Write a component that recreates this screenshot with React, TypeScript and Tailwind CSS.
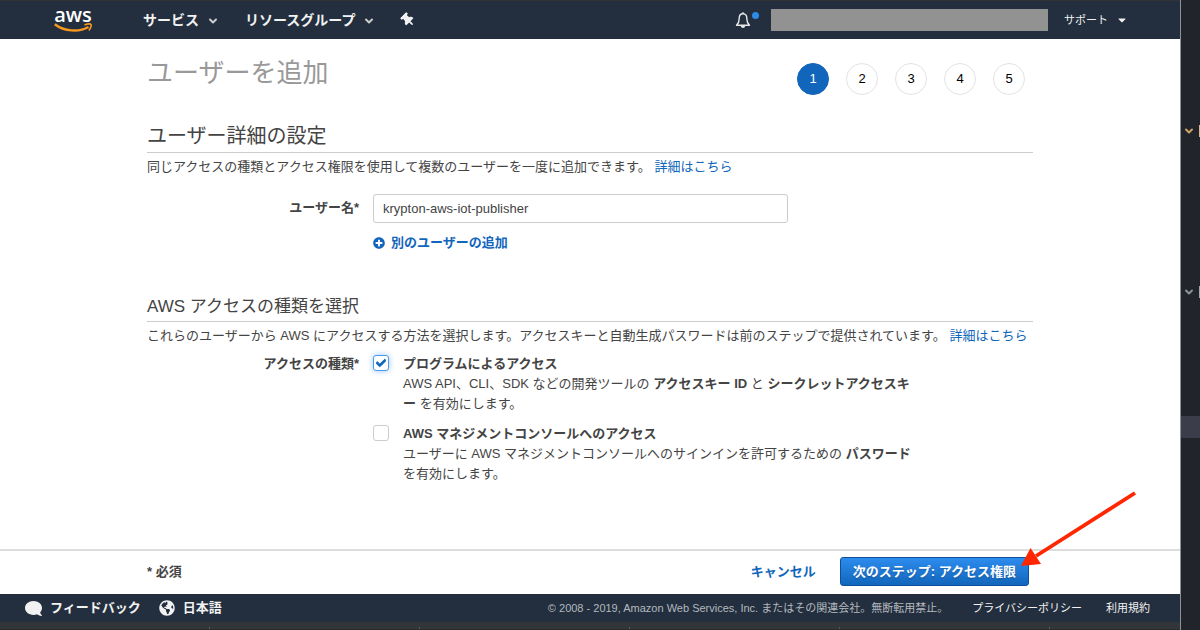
import React, { useState } from 'react';
import { ChevronDown } from 'lucide-react';
import { FaCaretDown, FaCheck, FaComment, FaGlobeAmericas, FaPlusCircle, FaThumbtack } from 'react-icons/fa';

const steps = [1, 2, 3, 4, 5];
const dockTabs = [1, 2, 3, 4, 5];

const AwsLogo: React.FC = () => (
  <a href="#" className="flex w-[38px] flex-col items-center text-white">
    <span className="font-['Open_Sans',sans-serif] text-[20px] leading-[13px] font-semibold">aws</span>
    <svg viewBox="0 0 38 10" className="mt-0.5 h-[10px] w-[38px]" fill="none" stroke="#f7981f">
      <path d="M.8 1.200C10 8.500 25 9.500 34.500 4" strokeWidth="2.400" />
      <path d="M30.500 2C33.500 .8 36.500 .8 37 1.500S36.800 5.500 34.800 7.500" strokeWidth="1.600" />
    </svg>
  </a>
);

const Bell: React.FC = () => (
  <svg viewBox="0 0 16 17" className="h-[17px] w-4" fill="none" stroke="#e8e8e8" strokeWidth="1.400">
    <path d="M8 1.800C5.200 1.800 4.200 4 4.200 6.500C4.200 10 3.300 11.500 1.500 13.300H14.500C12.700 11.500 11.800 10 11.800 6.500C11.800 4 10.800 1.800 8 1.800Z" strokeLinejoin="round" />
    <path d="M8 .3V2" />
    <path d="M5.800 13.800C6 16.700 10 16.700 10.200 13.800Z" fill="#e8e8e8" stroke="none" />
  </svg>
);

const Arrow: React.FC = () => (
  <svg viewBox="0 0 117 78" className="pointer-events-none absolute -right-[108px] bottom-[18px] h-[78px] w-[117px]">
    <path d="M115 3L16 66" stroke="#ff2600" strokeWidth="3.800" />
    <path d="M1 76L10.500 58L21 74Z" fill="#ff2600" />
  </svg>
);

type AccessOptionProps = {
  id: string;
  title: string;
  checked: boolean;
  onChange: (checked: boolean) => void;
  children: React.ReactNode;
};

const AccessOption: React.FC<AccessOptionProps> = ({ id, title, checked, onChange, children }) => (
  <div className="flex gap-[14px]">
    <span className="relative mt-px size-4 shrink-0">
      <input
        id={id}
        type="checkbox"
        checked={checked}
        onChange={(e) => onChange(e.target.checked)}
        className="block size-4 appearance-none rounded-[3px] border border-[#ccc] bg-white checked:border-[#4a9bee] checked:shadow-[0_0_6px_#9cc8f5]"
      />
      {checked && <FaCheck size={10} className="pointer-events-none absolute top-[3px] left-[3px] stroke-[#1166bb] stroke-[50px] text-[#1166bb]" />}
    </span>
    <div className="whitespace-nowrap">
      <label htmlFor={id} className="block font-bold">{title}</label>
      <p>{children}</p>
    </div>
  </div>
);

const EditorStrip: React.FC = () => (
  <aside className="flex w-5 shrink-0 flex-col border-l border-[#8b9396] bg-[#21252b]">
    <div className="mt-[125px] flex items-center justify-between">
      <ChevronDown size={12} strokeWidth={4} className="ml-0.5 text-[#c8a365]" />
      <span className="h-3 w-px bg-[#d7b981]" />
    </div>
    <div className="mt-[149px] flex items-center justify-between">
      <ChevronDown size={12} strokeWidth={4} className="ml-0.5 text-[#8b919d]" />
      <span className="h-3 w-px bg-[#a3a8b3]" />
    </div>
    <div className="mt-[118px] h-[22px] bg-[#3b3e4a]" />
  </aside>
);

const App: React.FC = () => {
  const [userName, setUserName] = useState('krypton-aws-iot-publisher');
  const [programmatic, setProgrammatic] = useState(true);
  const [consoleAccess, setConsoleAccess] = useState(false);

  return (
    <div className="flex min-h-screen bg-white font-['Liberation_Sans','Noto_Sans_CJK_JP',sans-serif] text-[13px] leading-5 text-[#444]">
      <div className="flex min-w-0 flex-1 flex-col">
        {/* Top navigation */}
        <header className="flex h-[39px] items-center border-t border-[#333] bg-[#232f3e] pr-[52px] pl-[54px] text-[#f2f2f2]">
          <AwsLogo />
          <nav className="ml-[51px] flex items-center text-[14px] font-bold">
            <button className="flex items-center gap-2">
              サービス
              <ChevronDown size={12} strokeWidth={4} className="mt-0.5 text-[#ccc]" />
            </button>
            <button className="ml-[26px] flex items-center gap-2">
              リソースグループ
              <ChevronDown size={12} strokeWidth={4} className="mt-0.5 text-[#ccc]" />
            </button>
            <button aria-label="Pin" className="ml-[26px]">
              <FaThumbtack size={14} className="-rotate-45" />
            </button>
          </nav>
          <div className="ml-auto flex items-center">
            <button aria-label="Notifications" className="relative">
              <Bell />
              <span className="absolute top-0 -right-2 size-[7px] rounded-full bg-[#2e8be6]" />
            </button>
            <div className="ml-5 h-[22px] w-[277px] bg-[#929292]" />
            <button className="ml-4 flex items-center gap-2 text-[11px]">
              サポート
              <FaCaretDown size={12} />
            </button>
          </div>
        </header>

        <main className="flex-1 px-[147px] pt-[18px]">
          <div className="flex justify-between">
            <h1 className="text-[26px] leading-8 text-[#999]">ユーザーを追加</h1>
            <ol className="mt-1.5 mr-2 flex gap-[17px] text-black">
              {steps.map((step) => (
                <li
                  key={step}
                  className={`flex size-8 items-center justify-center rounded-full border ${
                    step === 1 ? 'border-[#1166bb] bg-[#1166bb] text-white' : 'border-[#e3e3e3]'
                  }`}
                >
                  {step}
                </li>
              ))}
            </ol>
          </div>

          <h2 className="mt-[27px] border-b border-[#ccc] pb-0.5 text-[20px] leading-7">ユーザー詳細の設定</h2>
          <p className="mt-1">
            同じアクセスの種類とアクセス権限を使用して複数のユーザーを一度に追加できます。{' '}
            <a href="#" className="text-[#1166bb]">詳細はこちら</a>
          </p>

          <div className="mt-[17px] flex gap-[14px]">
            <label htmlFor="user-name" className="w-[212px] shrink-0 text-right leading-7 font-bold">ユーザー名*</label>
            <div className="w-[415px]">
              <input
                id="user-name"
                type="text"
                value={userName}
                onChange={(e) => setUserName(e.target.value)}
                className="block h-[29px] w-full rounded-[3px] border border-[#ccc] px-[9px]"
              />
              <button className="mt-2.5 flex items-center gap-1.5 font-bold text-[#1166bb]">
                <FaPlusCircle size={12} />
                別のユーザーの追加
              </button>
            </div>
          </div>

          <h3 className="mt-[42px] border-b border-[#ccc] pb-0.5 text-[17px] leading-6">AWS アクセスの種類を選択</h3>
          <p className="mt-1 whitespace-nowrap">
            これらのユーザーから AWS にアクセスする方法を選択します。アクセスキーと自動生成パスワードは前のステップで提供されています。{' '}
            <a href="#" className="text-[#1166bb]">詳細はこちら</a>
          </p>

          <div role="group" aria-labelledby="access-type" className="mt-2 flex gap-[14px]">
            <span id="access-type" className="w-[212px] shrink-0 text-right font-bold">アクセスの種類*</span>
            <div className="flex flex-col gap-2.5">
              <AccessOption id="programmatic" title="プログラムによるアクセス" checked={programmatic} onChange={setProgrammatic}>
                AWS API、CLI、SDK などの開発ツールの <b>アクセスキー ID</b> と <b>シークレットアクセスキ<br />ー</b> を有効にします。
              </AccessOption>
              <AccessOption id="console" title="AWS マネジメントコンソールへのアクセス" checked={consoleAccess} onChange={setConsoleAccess}>
                ユーザーに AWS マネジメントコンソールへのサインインを許可するための <b>パスワード</b>
                <br />
                を有効にします。
              </AccessOption>
            </div>
          </div>
        </main>

        {/* Wizard actions */}
        <div className="flex h-[45px] items-center border-t-2 border-[#ddd] pr-[151px] pb-0.5 pl-[147px] font-bold">
          <span>* 必須</span>
          <button className="ml-auto text-[#1166bb]">キャンセル</button>
          <div className="relative ml-6">
            <button className="block h-[29px] rounded-[3px] border border-[#0f509c] bg-linear-to-b from-[#2d8cee] to-[#1166bb] px-3 text-white text-shadow-sm">
              次のステップ: アクセス権限
            </button>
            <Arrow />
          </div>
        </div>

        <footer className="flex h-7 items-center bg-[#232f3e] pr-[30px] pl-[25px] text-[11px] text-[#f2f2f2]">
          <button className="flex items-center gap-2 text-[13px] font-bold">
            <FaComment size={17} className="-scale-x-100" />
            フィードバック
          </button>
          <button className="ml-[18px] flex items-center gap-2 text-[13px] font-bold">
            <FaGlobeAmericas size={16} />
            日本語
          </button>
          <span className="ml-auto text-[#b4b9bf]">© 2008 - 2019, Amazon Web Services, Inc. またはその関連会社。無断転用禁止。</span>
          <a href="#" className="ml-6">プライバシーポリシー</a>
          <a href="#" className="ml-6">利用規約</a>
        </footer>
        <div className="flex h-2 items-end overflow-hidden border-b border-[#282a2c] bg-[#333638]">
          {dockTabs.map((tab) => (
            <span key={tab} className="h-0.5 w-[210px] shrink-0 border-r border-[#55585a]" />
          ))}
        </div>
      </div>
      <EditorStrip />
    </div>
  );
};

export default App;
